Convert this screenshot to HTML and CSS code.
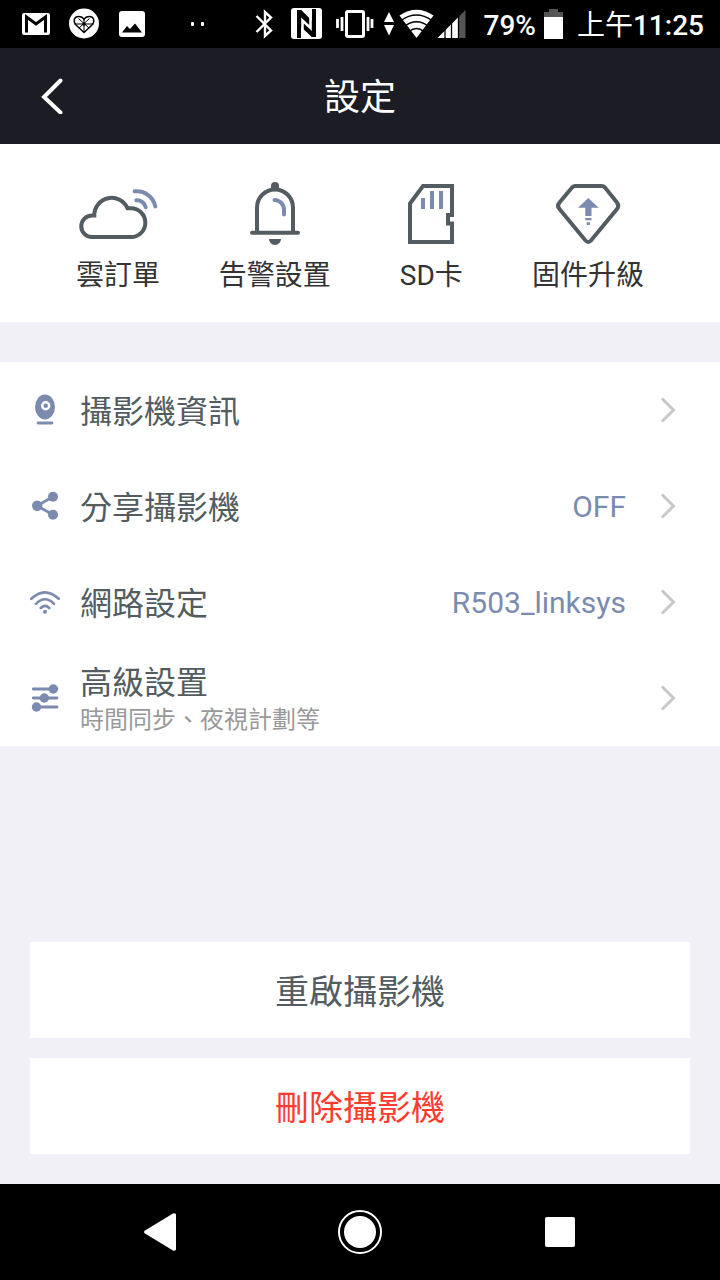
FILE: index.html
```html
<!DOCTYPE html>
<html lang="zh-Hant">
<head>
<meta charset="utf-8">
<meta name="viewport" content="width=device-width, initial-scale=1">
<title>設定</title>
<link rel="stylesheet" href="styles.css">
</head>
<body>
<div class="status">
  <div class="status-notes">
    <svg width="30" height="32" viewBox="0 0 30 32"><rect x="1" y="5" width="28" height="22" rx="2" fill="#fff"/><path d="M5.500 24.500V9L15 16L24.500 9V24.500" fill="none" stroke="#000" stroke-width="3"/></svg>
    <svg width="30" height="32" viewBox="0 0 30 32"><circle cx="15" cy="15.500" r="15" fill="#fff"/><path d="M15 24.500L7 17C3.500 13 5.500 8.500 9.500 8.500C12 8.500 14 9.500 15 11.500C16 9.500 18 8.500 20.500 8.500C24.500 8.500 26.500 13 23 17Z" fill="none" stroke="#000" stroke-width="1.400"/><path d="M15 11.500V24M5.500 16H24.500M9.500 10.500L20 20M20.500 10.500L10 20" fill="none" stroke="#000" stroke-width="1"/><circle cx="15" cy="16" r="1.700"/></svg>
    <svg width="30" height="32" viewBox="0 0 30 32"><rect x="2" y="3" width="26" height="26" rx="3" fill="#fff"/><path d="M5 24.500L10 18L13 21L18 15.500L25 24.500Z"/></svg>
    <svg width="40" height="32" viewBox="0 0 40 32"><rect x="26" y="14" width="3" height="4" rx="1" fill="#fff"/><rect x="36" y="14" width="3" height="4" rx="1" fill="#fff"/></svg>
  </div>
  <div class="status-right">
    <div class="status-radios">
      <svg width="34" height="32" viewBox="0 0 34 32"><path d="M3.500 8L18 22.500L12 28V4L18 9.500L3.500 24" fill="none" stroke="#fff" stroke-width="2.400"/></svg>
      <svg width="40" height="32" viewBox="0 0 40 32"><rect x="2" y="0" width="31" height="31" rx="3" fill="#fff"/><path d="M8 2H12L23 13V1H27V29H23L12 19V30H8Z"/><path d="M8 2H12L27 17V29H23L8 14Z"/><path d="M13.500 31V12.500L21.500 20V0" fill="none" stroke="#fff" stroke-width="2.600"/></svg>
      <svg width="48" height="32" viewBox="0 0 48 32"><rect x="15.500" y="3.500" width="17" height="25" rx="1.500" fill="none" stroke="#fff" stroke-width="3"/><path d="M6.500 11V20M11 9V23M37 9V23M41 11V20" stroke="#fff" stroke-width="2.800"/></svg>
      <svg width="16" height="32" viewBox="0 0 16 32"><path d="M8 4L13 14H3ZM3 17H13L8 27.500Z" fill="#fff"/></svg>
      <svg width="36" height="32" viewBox="0 0 36 32"><path d="M17.500 30L0.500 7.500Q17.500-4 34.500 7.500Z" fill="#fff"/><path d="M2 12.500Q17.500 1.500 33 12.500M6 18Q17.500 9.500 29 18M10 23.500Q17.500 17.500 25 23.500" fill="none" stroke="#000" stroke-width="1.500"/></svg>
      <svg width="30" height="32" viewBox="0 0 30 32"><path d="M0.500 30L22 8.500V30Z" fill="#fff"/><path d="M22 8.500L28.500 2V30H22Z" fill="#555"/><path d="M8 20V30M14.500 14V30M21.500 8V30" stroke="#000" stroke-width="1.300"/></svg>
    </div>
    <div class="status-text">
      <span class="percent">79%</span>
      <svg width="19" height="32" viewBox="0 0 19 32"><path d="M0 4H5V1H14V4H19V9H0Z" fill="#555"/><rect y="9" width="19" height="22" fill="#fff"/></svg>
      <span class="clock"><span class="meridiem">上午</span>11:25</span>
    </div>
  </div>
</div>

<header class="header">
  <button class="back" aria-label="返回"><svg width="24" height="36" viewBox="0 0 24 36"><path d="M20.500 2.500L4 19L20.500 34.500" fill="none" stroke="#fff" stroke-width="4" stroke-linecap="round"/></svg></button>
  <h1 class="title">設定</h1>
</header>

<nav class="shortcuts">
  <a class="shortcut" href="#cloud">
    <svg width="80" height="68" viewBox="0 0 80 68" fill="none" stroke="#535c60" stroke-width="4"><path d="M14 57H53A14.350 14.350 0 0 0 53 28.300H49.500A17.300 17.300 0 0 0 16.300 35.500H14A10.750 10.750 0 0 0 14 57Z"/><path d="M56.700 11.300C67 10.500 75.500 17 77.300 26.500M58.300 20.300C63 20 67 23 67.700 27.300" stroke="#7b8bb0" stroke-linecap="round"/></svg>
    <span>雲訂單</span>
  </a>
  <a class="shortcut" href="#alarm">
    <svg width="80" height="68" viewBox="0 0 80 68" fill="none" stroke="#535c60" stroke-width="4"><path d="M22 52V27.500A18 18 0 0 1 58 27.500V52"/><path d="M17 52.700H63" stroke-linecap="round"/><path d="M36 9V6A4 4 0 0 1 44 6V9ZM34 59H46A6 6 0 0 1 34 59Z" fill="#535c60" stroke="none"/><path d="M39.500 20A9.500 10 0 0 1 49 30V34.500" stroke="#7b8bb0" stroke-linecap="round"/></svg>
    <span>告警設置</span>
  </a>
  <a class="shortcut" href="#sd">
    <svg width="80" height="68" viewBox="0 0 80 68" fill="none" stroke="#535c60" stroke-width="4"><path d="M19 23.500L32 6H61V35H57V43.500H61V62H19Z"/><path d="M32 18V29M41 11V29M50 11V29" stroke="#7b8bb0"/></svg>
    <span>SD卡</span>
  </a>
  <a class="shortcut" href="#firmware">
    <svg width="80" height="68" viewBox="0 0 80 68" fill="none" stroke="#535c60" stroke-width="4"><path d="M27.500 6H53.500Q55.500 6 57 7.500L69 22.500Q71.500 26 69 29L43 60.500Q40.300 63.500 37.500 60.500L11.500 29Q8.500 26 11.500 22.500L24 7.500Q25.500 6 27.500 6Z"/><path d="M40.300 18L50.700 27.700H43.500V36H37.300V27.700H30ZM37.300 38H43.500V40.300H37.300ZM38.700 42.300H42V45H38.700Z" fill="#7b8bb0" stroke="none"/></svg>
    <span>固件升級</span>
  </a>
</nav>

<main class="settings">
  <a class="row" href="#info">
    <svg class="row-icon" width="32" height="32" viewBox="0 0 32 32" fill="#7b8bb0"><ellipse cx="16" cy="13" rx="10" ry="12.500"/><circle cx="16.700" cy="11.700" r="3.500" stroke="#fff" stroke-width="2.400"/><path d="M9 29H23" stroke="#7b8bb0" stroke-width="2.800" stroke-linecap="round"/></svg>
    <span class="row-label">攝影機資訊</span>
    <svg class="chevron" width="16" height="26" viewBox="0 0 16 26"><path d="M2 1.500L13.500 13L2 24.500"/></svg>
  </a>
  <a class="row" href="#share">
    <svg class="row-icon" width="32" height="32" viewBox="0 0 32 32" fill="#7b8bb0"><path d="M24 6.700L8 15.700L24 24.700" fill="none" stroke="#7b8bb0" stroke-width="2.800"/><circle cx="24" cy="6.700" r="5"/><circle cx="8.200" cy="15.700" r="5.200"/><circle cx="24" cy="24.700" r="5"/></svg>
    <span class="row-label">分享攝影機</span>
    <span class="row-value">OFF</span>
    <svg class="chevron" width="16" height="26" viewBox="0 0 16 26"><path d="M2 1.500L13.500 13L2 24.500"/></svg>
  </a>
  <a class="row" href="#network">
    <svg class="row-icon" width="32" height="32" viewBox="0 0 32 32" fill="none" stroke="#7b8bb0" stroke-width="2.600" stroke-linecap="round"><path d="M2.300 12.800Q16-0.200 29.700 12.800M7 17.800Q16 8.700 25 17.800M11.800 22Q16 17.800 20.200 22"/><circle cx="16" cy="25.700" r="2" fill="#7b8bb0" stroke="none"/></svg>
    <span class="row-label">網路設定</span>
    <span class="row-value">R503_linksys</span>
    <svg class="chevron" width="16" height="26" viewBox="0 0 16 26"><path d="M2 1.500L13.500 13L2 24.500"/></svg>
  </a>
  <a class="row" href="#advanced">
    <svg class="row-icon" width="32" height="32" viewBox="0 0 32 32" fill="#7b8bb0"><path d="M4.300 7H28M4.300 16H28M4.300 25H28" stroke="#7b8bb0" stroke-width="2.800" stroke-linecap="round"/><circle cx="24.300" cy="7" r="4.700"/><circle cx="15.300" cy="16" r="4.700"/><circle cx="7.500" cy="25" r="4.700"/></svg>
    <span class="row-label">高級設置<small class="row-note">時間同步、夜視計劃等</small></span>
    <svg class="chevron" width="16" height="26" viewBox="0 0 16 26"><path d="M2 1.500L13.500 13L2 24.500"/></svg>
  </a>
</main>

<div class="actions">
  <button class="action">重啟攝影機</button>
  <button class="action danger">刪除攝影機</button>
</div>

<div class="navbar">
  <button class="key" aria-label="返回"><svg width="48" height="48" viewBox="0 0 48 48" fill="#fff"><path d="M9 22.500L37 5.500Q40 4.500 40 7V41Q40 43.500 37 42.500L9 25.500Q7 24 9 22.500Z"/></svg></button>
  <button class="key" aria-label="主畫面"><svg width="48" height="48" viewBox="0 0 48 48" fill="#fff"><circle cx="24" cy="24" r="16"/><circle cx="24" cy="24" r="21" fill="none" stroke="#fff" stroke-width="2"/></svg></button>
  <button class="key" aria-label="最近使用"><svg width="48" height="48" viewBox="0 0 48 48" fill="#fff"><rect x="9" y="9" width="30" height="30" rx="2"/></svg></button>
</div>
</body>
</html>
```
FILE: styles.css
```css
* {
  box-sizing: border-box;
}

body {
  margin: 0;
  min-height: 100vh;
  display: flex;
  flex-direction: column;
  background: #f0f0f6;
  font-family: Roboto, "Noto Sans CJK TC", sans-serif;
  color: #535c60;
}

svg {
  display: block;
  flex: none;
}

a {
  color: inherit;
  text-decoration: none;
}

button {
  border: 0;
  padding: 0;
  background: none;
  font: inherit;
  color: inherit;
}

.status {
  display: flex;
  align-items: center;
  justify-content: space-between;
  height: 48px;
  padding: 0 16px 0 21px;
  background: #000;
  color: #fff;
}

.status-notes {
  display: flex;
  gap: 18px;
}

.status-right {
  display: flex;
  align-items: center;
  gap: 16px;
}

.status-radios {
  display: flex;
  gap: 2px;
}

.status-text {
  display: flex;
  align-items: center;
  gap: 8px;
  font-size: 28px;
  line-height: 32px;
  font-weight: 500;
}

.percent,
.clock {
  padding-top: 3px;
}

.clock {
  padding-left: 6px;
}

.meridiem {
  font-weight: 400;
}

.header {
  display: grid;
  grid-template-columns: 80px 1fr 80px;
  align-items: center;
  height: 96px;
  background: #1c1c25;
  color: #fff;
}

.back {
  justify-self: center;
  padding-left: 24px;
}

.title {
  margin: 0;
  padding-top: 4px;
  text-align: center;
  font-size: 36px;
  line-height: 48px;
  font-weight: 400;
}

.shortcuts {
  display: flex;
  justify-content: space-between;
  padding: 36px 76px 26px 68px;
  background: #fff;
  color: #333;
}

.shortcut {
  display: flex;
  flex-direction: column;
  align-items: center;
  gap: 8px;
  min-width: 100px;
  font-size: 28px;
  line-height: 40px;
}

.settings {
  margin-top: 40px;
  background: #fff;
}

.row {
  display: flex;
  align-items: center;
  height: 96px;
  padding: 0 44px 0 29px;
}

.row-label {
  flex: 1;
  padding: 4px 0 0 19px;
  font-size: 32px;
  line-height: 40px;
}

.row-note {
  display: block;
  font-size: 24px;
  line-height: 34px;
  color: #999;
}

.row-value {
  padding-top: 2px;
  font-size: 30px;
  line-height: 40px;
  color: #7b8bb0;
}

.chevron {
  margin-left: 34px;
  fill: none;
  stroke: #c7c7cc;
  stroke-width: 3;
}

.actions {
  display: flex;
  flex-direction: column;
  gap: 20px;
  margin-top: auto;
  padding: 30px;
}

.action {
  height: 96px;
  padding-bottom: 2px;
  background: #fff;
  font-size: 34px;
}

.danger {
  color: #ff3b30;
}

.navbar {
  display: grid;
  grid-template-columns: repeat(3, 1fr);
  height: 96px;
  padding: 0 60px;
  background: #000;
}

.key {
  display: grid;
  place-items: center;
}
```
